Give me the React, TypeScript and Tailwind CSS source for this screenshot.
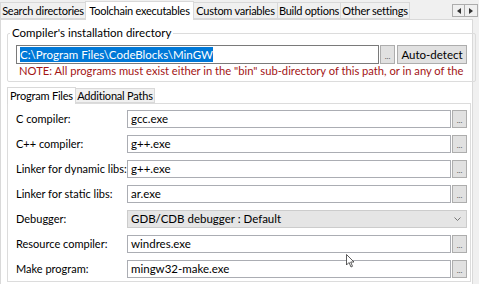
import React from 'react';

const rows = [
  { label: 'C compiler:', value: 'gcc.exe' },
  { label: 'C++ compiler:', value: 'g++.exe' },
  { label: 'Linker for dynamic libs:', value: 'g++.exe' },
  { label: 'Linker for static libs:', value: 'ar.exe' },
  { label: 'Debugger:', value: 'GDB/CDB debugger : Default', select: true },
  { label: 'Resource compiler:', value: 'windres.exe' },
  { label: 'Make program:', value: 'mingw32-make.exe' },
];

const topTabs = [
  { t: 'Search directories', w: 'w-[86px]' },
  { t: 'Toolchain executables', w: 'w-[109px]' },
  { t: 'Custom variables', w: 'w-[85px]' },
  { t: 'Build options', w: 'w-[64px]' },
  { t: 'Other settings', w: 'w-[70px]' },
];

function Dots() {
  return (
    <div className="w-[15px] h-[18px] bg-[#e1e1e1] border border-[#adadad] flex items-end justify-center pb-[3px] text-[8px] leading-none text-[#555]">
      ...
    </div>
  );
}

export default function App() {
  return (
    <div
      className="w-[479px] h-[284px] bg-[#f0f0f0] text-[11px] text-black overflow-hidden relative whitespace-nowrap"
      style={{ fontFamily: 'Lato, "Open Sans", sans-serif' }}
    >
      {/* top tabs */}
      <div className="flex items-end h-[19px] relative tracking-[-0.25px]">
        {topTabs.map(({ t, w }, i) =>
          i === 1 ? (
            <div key={t} className={`${w} h-[19px] text-center bg-white border border-b-0 border-[#d9d9d9] leading-[17px] relative z-10 -mb-px -ml-px`}>
              {t}
            </div>
          ) : (
            <div key={t} className={`${w} h-[17px] text-center bg-[#f0f0f0] border border-[#d9d9d9] leading-[15px] ${i > 0 ? '-ml-px' : ''}`}>
              {t}
            </div>
          )
        )}
        <div className="ml-auto mr-[1px] mb-[2px] flex">
          <div className="w-[13px] h-[13px] border border-[#adadad] bg-[#f0f0f0] flex items-center justify-center">
            <svg width="4" height="6" viewBox="0 0 4 6"><path d="M4 0 L0 3 L4 6 Z" fill="#333" /></svg>
          </div>
          <div className="w-[13px] h-[13px] border border-l-0 border-[#adadad] bg-[#f0f0f0] flex items-center justify-center">
            <svg width="4" height="6" viewBox="0 0 4 6"><path d="M0 0 L4 3 L0 6 Z" fill="#333" /></svg>
          </div>
        </div>
      </div>

      {/* content */}
      <div className="bg-white border border-[#d9d9d9] w-[473px] h-[270px] px-[6px] pt-[7px]">
        <fieldset className="border border-[#dcdcdc] rounded-[2px] px-[8px] pb-[3px] h-[56px] -mt-[1px]">
          <legend className="px-[2px] ml-[-6px] leading-[14px] text-[11.5px]">Compiler's installation directory</legend>
          <div className="flex items-center gap-[1px] mt-[5px]">
            <div className="w-[363px] h-[19px] border border-[#7a7a7a] bg-white flex items-center px-[3px] text-[11.5px]">
              <span className="bg-[#0078d7] text-white leading-[15px]">C:\Program Files\CodeBlocks\MinGW</span>
            </div>
            <div className="w-[15px] h-[19px] bg-[#e1e1e1] border border-[#adadad] flex items-end justify-center pb-[3px] text-[8px] leading-none text-[#555]">...</div>
            <div className="ml-[1px] w-[70px] h-[19px] bg-[#e1e1e1] border border-[#adadad] flex items-center justify-center text-[11.5px]">Auto-detect</div>
          </div>
          <div className="text-[#a31515] leading-[14px] pl-[3px] overflow-hidden text-[11.2px]">
            NOTE: All programs must exist either in the "bin" sub-directory of this path, or in any of the
          </div>
        </fieldset>

        {/* inner tabs */}
        <div className="flex items-end h-[17px] mt-[4px] relative tracking-[-0.2px]">
          <div className="w-[69px] h-[17px] text-center bg-white border border-b-0 border-[#d9d9d9] leading-[15px] relative z-10 -mb-px">Program Files</div>
          <div className="w-[80px] h-[15px] text-center bg-[#f0f0f0] border border-[#d9d9d9] -ml-px leading-[13px]">Additional Paths</div>
        </div>
        <div className="border border-[#dcdcdc] h-[179px] w-[464px] pl-[8px] pt-[6px] flex flex-col gap-[7px]">
          {rows.map((r) => (
            <div key={r.label} className="flex items-center h-[18px]">
              <div className="w-[111px] shrink-0 overflow-hidden">{r.label}</div>
              {r.select ? (
                <div className="w-[340px] h-[18px] bg-[#e5e5e5] border border-[#cccccc] flex items-center px-[3px] text-[11.5px]">
                  <span>{r.value}</span>
                  <svg className="ml-auto mr-[2px]" width="7" height="4" viewBox="0 0 7 4"><path d="M0.5 0.5 L3.5 3.5 L6.5 0.5" stroke="#777" fill="none" /></svg>
                </div>
              ) : (
                <div className="flex items-center">
                  <div className="w-[324px] h-[18px] border border-[#abadb3] bg-white flex items-center px-[3px] text-[11.5px]">{r.value}</div>
                  <div className="ml-[1px]"><Dots /></div>
                </div>
              )}
            </div>
          ))}
        </div>
      </div>

      {/* mouse cursor */}
      <svg className="absolute left-[346px] top-[254px]" width="10" height="14" viewBox="0 0 10 14">
        <path d="M0.5 0.5 L0.5 11 L3 8.5 L5 13 L6.5 12.3 L4.7 8 L8 8 Z" fill="white" stroke="#333" strokeWidth="0.8" />
      </svg>
    </div>
  );
}
